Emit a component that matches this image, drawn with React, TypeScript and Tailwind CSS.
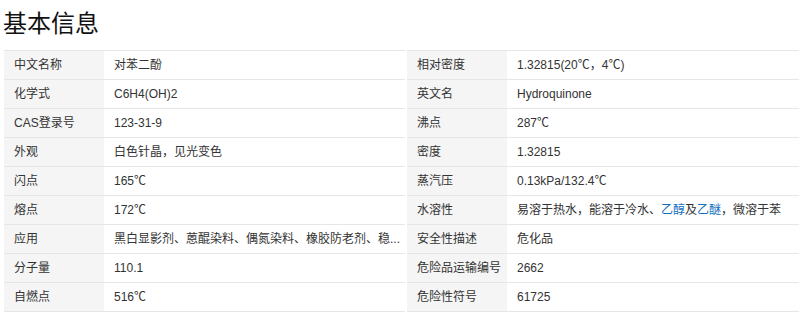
import React from 'react';

type Item = { label: string; value: React.ReactNode };

const left: Item[] = [
  { label: '中文名称', value: '对苯二酚' },
  { label: '化学式', value: 'C6H4(OH)2' },
  { label: 'CAS登录号', value: '123-31-9' },
  { label: '外观', value: '白色针晶，见光变色' },
  { label: '闪点', value: '165℃' },
  { label: '熔点', value: '172℃' },
  { label: '应用', value: '黑白显影剂、蒽醌染料、偶氮染料、橡胶防老剂、稳...' },
  { label: '分子量', value: '110.1' },
  { label: '自燃点', value: '516℃' },
];

const right: Item[] = [
  { label: '相对密度', value: '1.32815(20℃，4℃)' },
  { label: '英文名', value: 'Hydroquinone' },
  { label: '沸点', value: '287℃' },
  { label: '密度', value: '1.32815' },
  { label: '蒸汽压', value: '0.13kPa/132.4℃' },
  {
    label: '水溶性',
    value: (
      <>
        易溶于热水，能溶于冷水、
        <a href="#" className="text-[#136ec2]">乙醇</a>
        及
        <a href="#" className="text-[#136ec2]">乙醚</a>
        ，微溶于苯
      </>
    ),
  },
  { label: '安全性描述', value: '危化品' },
  { label: '危险品运输编号', value: '2662' },
  { label: '危险性符号', value: '61725' },
];

function InfoTable({ items, className }: { items: Item[]; className?: string }) {
  return (
    <dl className={`border-t border-[#e6e6e6] ${className ?? ''}`}>
      {items.map((it) => (
        <div key={it.label} className="flex h-[29px] border-b border-[#e6e6e6]">
          <dt className="w-[100px] shrink-0 bg-[#f5f5f5] pl-[10px] leading-[28px] whitespace-nowrap">
            {it.label}
          </dt>
          <dd className="min-w-0 flex-1 pl-[10px] leading-[28px] whitespace-nowrap">
            {it.value}
          </dd>
        </div>
      ))}
    </dl>
  );
}

export default function App() {
  return (
    <div
      className="w-[799px] h-[327px] bg-white text-[12px] text-[#333] overflow-hidden"
      style={{ fontFamily: '"Liberation Sans", Arial, "Noto Sans CJK SC", sans-serif' }}
    >
      <h2 className="pl-[3px] text-[24px] leading-[48px] mb-[2px] text-[#111] font-normal">基本信息</h2>
      <div className="flex gap-[2px] pl-[4px]">
        <InfoTable items={left} className="w-[401px]" />
        <InfoTable items={right} className="flex-1" />
      </div>
    </div>
  );
}
